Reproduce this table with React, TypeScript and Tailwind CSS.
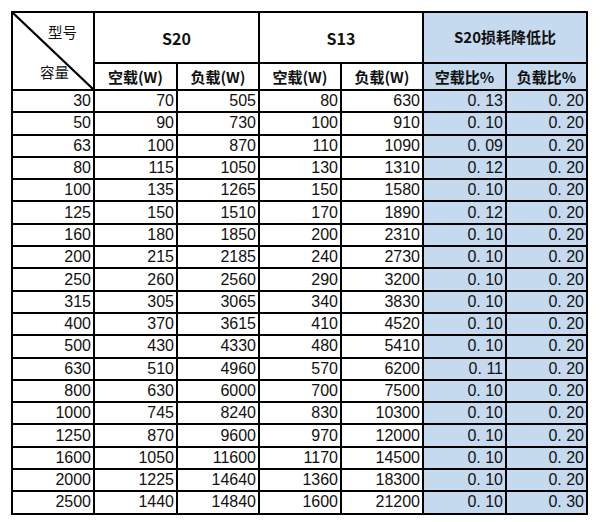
import React from "react";

const rows: [string, string, string, string, string, string, string][] = [
  ["30", "70", "505", "80", "630", "0. 13", "0. 20"],
  ["50", "90", "730", "100", "910", "0. 10", "0. 20"],
  ["63", "100", "870", "110", "1090", "0. 09", "0. 20"],
  ["80", "115", "1050", "130", "1310", "0. 12", "0. 20"],
  ["100", "135", "1265", "150", "1580", "0. 10", "0. 20"],
  ["125", "150", "1510", "170", "1890", "0. 12", "0. 20"],
  ["160", "180", "1850", "200", "2310", "0. 10", "0. 20"],
  ["200", "215", "2185", "240", "2730", "0. 10", "0. 20"],
  ["250", "260", "2560", "290", "3200", "0. 10", "0. 20"],
  ["315", "305", "3065", "340", "3830", "0. 10", "0. 20"],
  ["400", "370", "3615", "410", "4520", "0. 10", "0. 20"],
  ["500", "430", "4330", "480", "5410", "0. 10", "0. 20"],
  ["630", "510", "4960", "570", "6200", "0. 11", "0. 20"],
  ["800", "630", "6000", "700", "7500", "0. 10", "0. 20"],
  ["1000", "745", "8240", "830", "10300", "0. 10", "0. 20"],
  ["1250", "870", "9600", "970", "12000", "0. 10", "0. 20"],
  ["1600", "1050", "11600", "1170", "14500", "0. 10", "0. 20"],
  ["2000", "1225", "14640", "1360", "18300", "0. 10", "0. 20"],
  ["2500", "1440", "14840", "1600", "21200", "0. 10", "0. 30"],
];

const cjk = "font-['Noto_Sans_CJK_SC',sans-serif]";
const num = "font-['Liberation_Sans',Arial,sans-serif]";

export default function App() {
  return (
    <div className="w-[600px] h-[522px] bg-white pt-[11px] pl-[11px] text-[#111]">
      <table className="border-collapse table-fixed w-[577px] border-2 border-black">
        <colgroup>
          <col className="w-[82px]" />
          <col className="w-[83px]" />
          <col className="w-[82px]" />
          <col className="w-[82px]" />
          <col className="w-[82px]" />
          <col className="w-[83px]" />
          <col className="w-[81px]" />
        </colgroup>
        <thead>
          <tr className="h-[51px]">
            <td rowSpan={2} className={`border-2 border-black p-0 ${cjk} text-[14.5px]`}>
              <div className="relative h-[76px] w-[80px]">
                <svg className="absolute left-0 top-0" width="80" height="76" viewBox="0 0 80 76">
                  <line x1="0" y1="0" x2="80" y2="76" stroke="black" strokeWidth="2.2" />
                </svg>
                <div className="flex flex-col">
                  <div className="pl-[35px] pt-[12px] leading-none">型号</div>
                  <div className="pl-[27px] pt-[25px] leading-none">容量</div>
                </div>
              </div>
            </td>
            <td colSpan={2} className={`border-2 border-black text-center font-bold text-[16px] ${cjk}`}>S20</td>
            <td colSpan={2} className={`border-2 border-black text-center font-bold text-[16px] ${cjk}`}>S13</td>
            <td colSpan={2} className={`border-2 border-black text-center font-bold text-[15px] bg-[#c5d9ef] ${cjk}`}>S20损耗降低比</td>
          </tr>
          <tr className="h-[27px]">
            {["空载(W)", "负载(W)", "空载(W)", "负载(W)"].map((t, i) => (
              <td key={i} className={`border-2 border-black text-center font-bold text-[15px] leading-none p-0 ${cjk}`}>{t}</td>
            ))}
            {["空载比%", "负载比%"].map((t, i) => (
              <td key={i} className={`border-2 border-black text-center font-bold text-[15px] leading-none p-0 bg-[#c5d9ef] ${cjk}`}>{t}</td>
            ))}
          </tr>
        </thead>
        <tbody>
          {rows.map((r, ri) => (
            <tr key={ri} className="h-[22.3px]">
              {r.map((c, ci) => (
                <td
                  key={ci}
                  className={`border-2 border-black text-right pr-[2px] pl-0 py-0 text-[16px] leading-none ${num} ${ci >= 5 ? "bg-[#c5d9ef]" : ""}`}
                >
                  {c}
                </td>
              ))}
            </tr>
          ))}
        </tbody>
      </table>
    </div>
  );
}
